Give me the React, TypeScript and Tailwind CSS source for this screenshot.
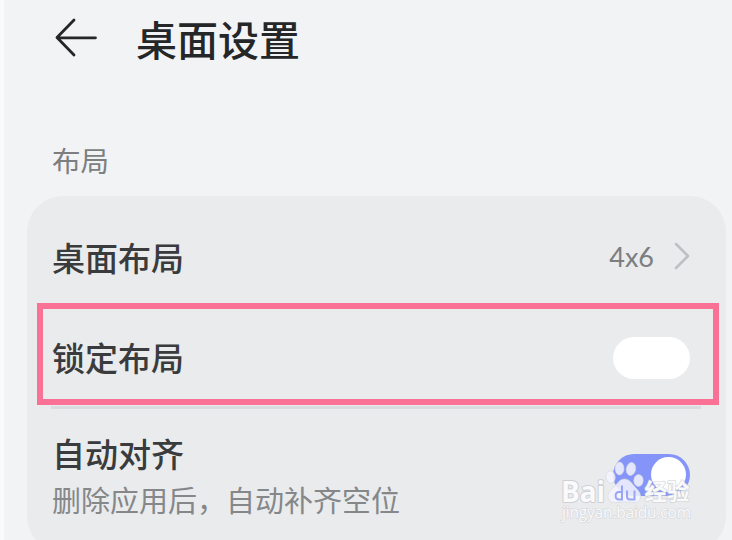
import type { ReactNode } from 'react';

function SettingRow({ title, className, children }: { title: string; className: string; children: ReactNode }) {
  return (
    <div className={`relative flex items-center justify-between pl-[25px] pr-[36px] ${className}`}>
      <h2 className="-mt-px text-[33px] leading-[40px] font-medium text-[#3a3b3d]">{title}</h2>
      {children}
    </div>
  );
}

function Toggle({ on = false, label }: { on?: boolean; label: string }) {
  return (
    <button
      type="button"
      role="switch"
      aria-checked={on}
      aria-label={label}
      className={`flex h-[42px] w-[77px] items-center justify-end rounded-full pr-1 ${on ? 'bg-[#8594f8]' : 'bg-white'}`}
    >
      <span className="size-[35px] rounded-full bg-white" />
    </button>
  );
}

function Watermark() {
  return (
    <div className="absolute top-[460px] left-[556px] h-[66px] w-[140px]">
      <svg viewBox="0 0 140 66" className="size-full overflow-visible" fontFamily="'Open Sans', 'Noto Sans CJK SC', sans-serif">
        <g fill="#f4f5ff" fillOpacity=".85" stroke="#d3d5d9" strokeOpacity=".75" strokeWidth=".8">
          <ellipse cx="50.5" cy="17" rx="4.7" ry="6.3" transform="rotate(-8 50.5 17)" />
          <ellipse cx="59.5" cy="8.5" rx="4.5" ry="6.5" />
          <ellipse cx="71" cy="9" rx="4.7" ry="6.5" transform="rotate(10 71 9)" />
          <ellipse cx="78.5" cy="20.5" rx="4.7" ry="6" />
          <path d="M64.5 19c5 0 7 4 10.5 8 4 4 6 6.500 5.500 10.500-.6 4.500-4 5.500-7.500 5-5-.8-11-.8-16 0-4.500.7-8.500-1-9-5.500-.4-4 2.500-6.500 6-10 4-4 5.500-8 10.500-8Z" />
        </g>
        <path d="M62 25.500v14h-3c-4.500 0-4.500-7.500 0-7.500h3M67 30.500v6c0 2 1 3 3 3h4.500v-9" fill="none" stroke="#9aa6f3" strokeWidth="2" />
        <g fill="#fafafb" fontWeight="bold" stroke="#cdd0d5" strokeWidth="2" strokeLinejoin="round" paintOrder="stroke">
          <text x="1" y="41.5" fontSize="28.500" textLength="44" lengthAdjust="spacingAndGlyphs">Bai</text>
          <text x="84.5" y="40" fontSize="23" textLength="45" lengthAdjust="spacingAndGlyphs" strokeWidth="1.2">经验</text>
        </g>
        <text x="2" y="58" fontSize="15.5" fill="#fafafb" stroke="#d3d5d8" strokeWidth="1.2" paintOrder="stroke" textLength="129" lengthAdjust="spacing">
          jingyan.baidu.com
        </text>
      </svg>
    </div>
  );
}

export default function App() {
  return (
    <main className="relative h-[540px] w-[732px] overflow-hidden border-l-4 border-[#f8fafc] bg-[#f1f3f5] font-['Noto_Sans_CJK_SC',sans-serif]">
      <header className="flex h-[76px] items-center pl-[50px]">
        <button type="button" aria-label="返回" className="mr-[39px]">
          <svg viewBox="0 0 43 40" className="h-[40px] w-[43px]" fill="none" stroke="#252627" strokeWidth="2.8" strokeLinecap="round" strokeLinejoin="round">
            <path d="M20 2 3 19.5 20 37M3.5 19.8H41.5" />
          </svg>
        </button>
        <h1 className="-mt-px text-[41px] leading-[60px] font-medium text-[#252627]">桌面设置</h1>
      </header>

      <p className="mt-[64px] ml-[48px] text-[28.5px] leading-[40px] text-[#7c7e80]">布局</p>

      <section className="mt-[16px] ml-[23px] h-[356px] w-[699px] rounded-[36px] bg-[#e9ebed]">
        <SettingRow title="桌面布局" className="h-[122px]">
          <div className="flex items-center gap-[20px]">
            <span className="font-[Lato,sans-serif] text-[27px] leading-[40px] text-[#7c7e80]">4x6</span>
            <svg viewBox="0 0 16 28" className="-mt-[2px] h-[28px] w-[16px]" fill="none" stroke="#bdbfc2" strokeWidth="2.5" strokeLinecap="round" strokeLinejoin="round">
              <path d="m2 2 12 12L2 26" />
            </svg>
          </div>
        </SettingRow>

        <SettingRow title="锁定布局" className="mt-[2px] h-[75px]">
          <Toggle label="锁定布局" />
          <span className="pointer-events-none absolute -top-[17px] left-[10px] h-[102px] w-[682px] border-6 border-[#fa7196]" />
        </SettingRow>

        <div className="mt-[11px] ml-[24px] h-[3px] w-[650px] bg-[#d9dbde]" />

        <SettingRow title="自动对齐" className="mt-[24px] h-[40px]">
          <div className="mt-[43px]">
            <Toggle on label="自动对齐" />
          </div>
        </SettingRow>
        <p className="mt-[6px] ml-[25px] text-[29px] leading-[40px] text-[#858789]">删除应用后，自动补齐空位</p>
      </section>

      <Watermark />
    </main>
  );
}
